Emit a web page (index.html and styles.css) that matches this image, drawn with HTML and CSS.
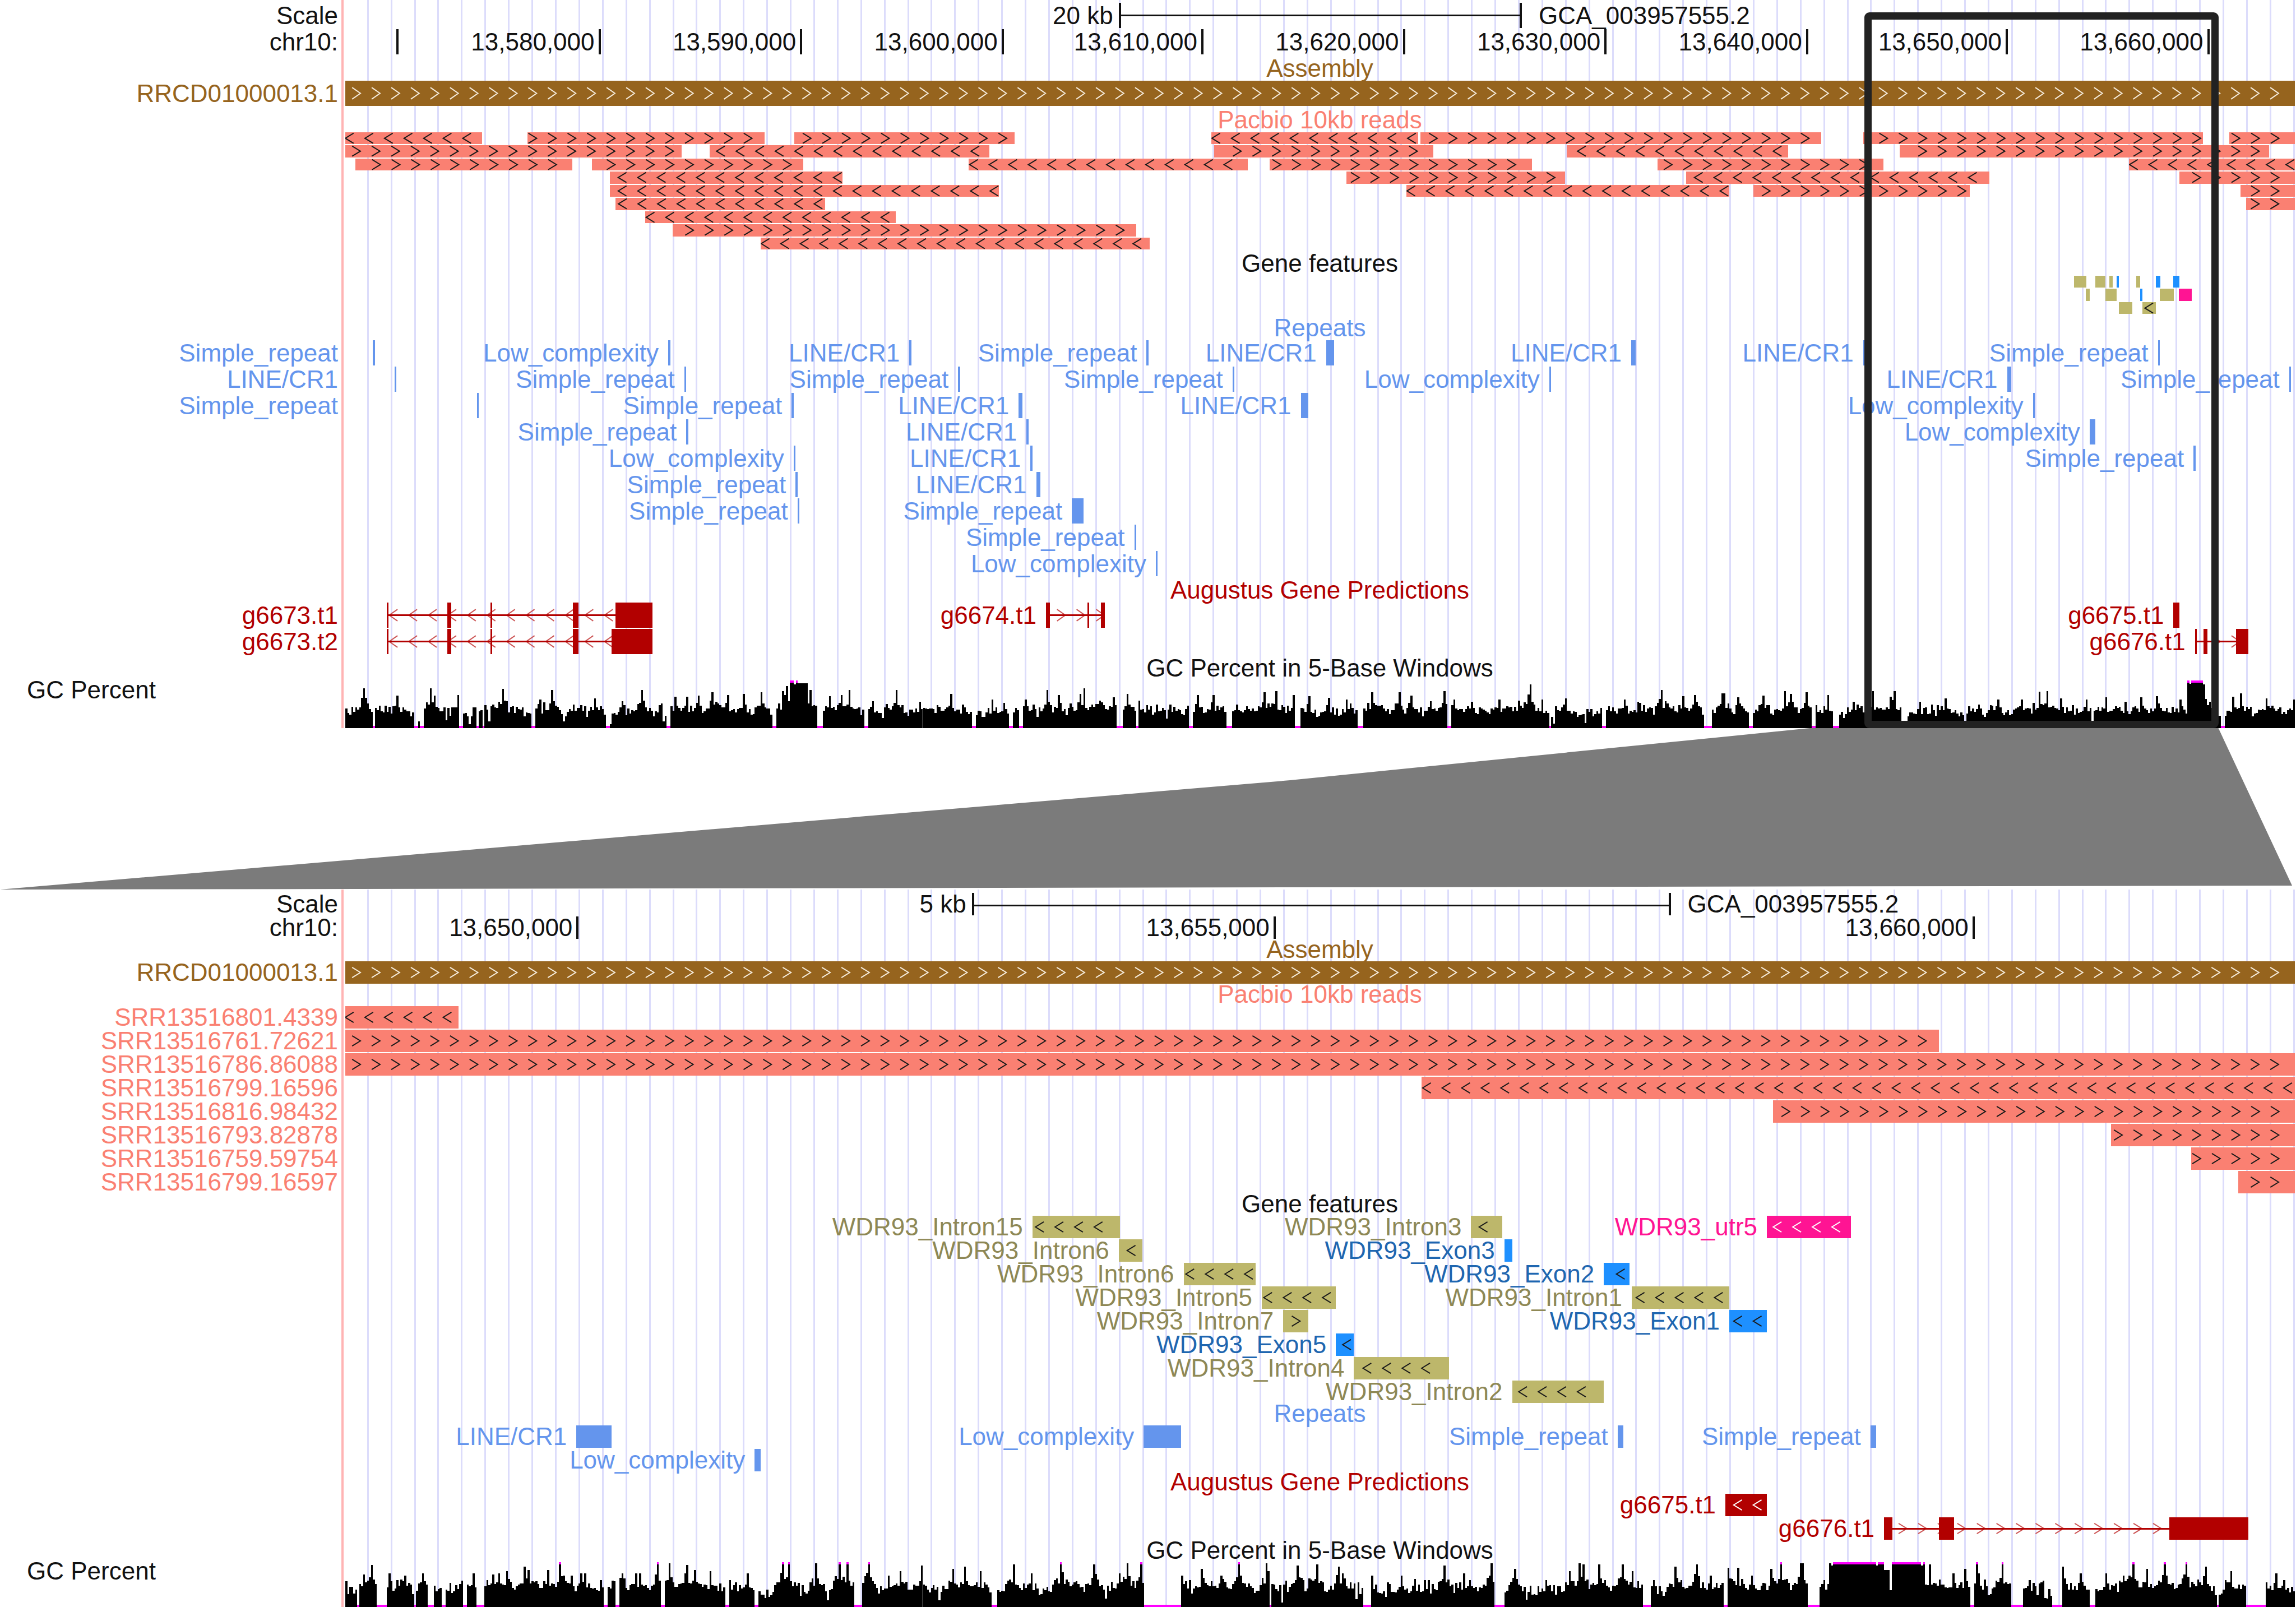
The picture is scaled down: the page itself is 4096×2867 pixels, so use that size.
FILE: index.html
```html
<!DOCTYPE html>
<html lang="en">
<head>
<meta charset="utf-8">
<title>GCA_003957555.2 chr10 genome browser</title>
<link rel="stylesheet" href="styles.css">
</head>
<body>
<main class="browser">
  <section class="panel panel-wide">
    <div class="track" data-track="wideScale"></div>
    <div class="track" data-track="wideRuler"></div>
    <h2 class="title assembly">Assembly</h2>
    <div class="track assembly" data-track="assembly"></div>
    <h2 class="title reads">Pacbio 10kb reads</h2>
    <div class="track reads dense dense-nine" data-track="wideReads"></div>
    <h2 class="title">Gene features</h2>
    <div class="track dense dense-three" data-track="wideFeatures"></div>
    <h2 class="title repeats">Repeats</h2>
    <div class="track repeats" data-track="wideRepeats"></div>
    <h2 class="title genes">Augustus Gene Predictions</h2>
    <div class="track genes" data-track="wideGenes"></div>
    <h2 class="title">GC Percent in 5-Base Windows</h2>
    <div class="row wiggle">
      <span class="wiggle-label">GC Percent</span>
      <div class="lane" data-wiggle="wide"></div>
    </div>
    <div class="highlight"></div>
  </section>

  <svg class="funnel" viewBox="0 0 4704 288" preserveAspectRatio="none" aria-hidden="true">
    <polygon points="3708,0 4545,0 4696,281 0,288 2643,93"/>
  </svg>

  <section class="panel panel-close">
    <div class="track" data-track="closeScale"></div>
    <div class="track" data-track="closeRuler"></div>
    <h2 class="title assembly">Assembly</h2>
    <div class="track assembly" data-track="assembly"></div>
    <h2 class="title reads">Pacbio 10kb reads</h2>
    <div class="track reads" data-track="closeReads"></div>
    <h2 class="title">Gene features</h2>
    <div class="track" data-track="closeFeatures"></div>
    <h2 class="title repeats">Repeats</h2>
    <div class="track repeats" data-track="closeRepeats"></div>
    <h2 class="title genes">Augustus Gene Predictions</h2>
    <div class="track genes" data-track="closeGenes"></div>
    <h2 class="title">GC Percent in 5-Base Windows</h2>
    <div class="row wiggle">
      <span class="wiggle-label">GC Percent</span>
      <div class="lane" data-wiggle="close"></div>
    </div>
  </section>
</main>
<script src="app.js"></script>
</body>
</html>
```
FILE: styles.css
```css
* {
  box-sizing: border-box;
}

body {
  margin: 0;
  background: #fff;
  color: #111;
  font-family: "Liberation Sans", Arial, Helvetica, sans-serif;
  font-size: 44px;
}

.browser {
  display: flex;
  flex-direction: column;
  overflow: hidden;
}

/* Panels: a label column, then the plot with its guide lines. */
.panel {
  --label-column: 14.966%;
  --pitch: 47px;
  --title: 45px;
  position: relative;
  padding-top: 5px;
}

.panel-close {
  --pitch: 42px;
  --title: 34px;
  padding-top: 6px;
}

.panel::before {
  content: "";
  position: absolute;
  inset: 0 0 0 var(--label-column);
  margin-left: -4px;
  border-left: 4px solid #ffb4b4;
  background:
    linear-gradient(#fff, #fff) 0 0 / 6px 100% no-repeat,
    repeating-linear-gradient(to right,
      #dcdcfb 1.2%, #dcdcfb calc(1.2% + 3px),
      #fff calc(1.2% + 3px), #fff 2.403%);
}

.title {
  position: relative;
  margin: 0 0 0 var(--label-column);
  font-size: inherit;
  font-weight: normal;
  line-height: var(--title);
  text-align: center;
}

.panel-close .title {
  padding-bottom: 4px;
}

.track {
  position: relative;
  display: grid;
  grid-auto-rows: 1fr;
}

.row {
  position: relative;
  display: grid;
  grid-template-columns: var(--label-column) 1fr;
  min-height: var(--pitch);
  line-height: calc(var(--pitch) - 2px);
  white-space: nowrap;
}

.dense .row {
  min-height: 0;
}

.dense-nine {
  min-height: 211px;
}

.dense-three {
  min-height: 70px;
}

.row-label {
  padding-right: 10px;
  text-align: right;
}

.lane {
  position: relative;
}

/* Items sit at their genomic position in the lane. */
.item {
  position: absolute;
  top: 0;
  bottom: 2px;
}

.item svg,
.wiggle svg {
  position: absolute;
  inset: 0;
  display: block;
  width: 100%;
  height: 100%;
}

.item-label {
  position: absolute;
  right: 100%;
  margin-right: 17px;
}

.arrows {
  fill: none;
  stroke: #1a1a1a;
  stroke-width: 2px;
  vector-effect: non-scaling-stroke;
}

.arrows.light {
  stroke: #fff;
}

.assembly { color: #96641e; }
.reads { color: #fa8072; }
.repeats { color: #6495ed; }
.genes { color: #b20000; }
.assembly .block { background: #96641e; }
.reads .block { background: #fa8072; }
.repeats .block { background: #6495ed; }
.genes .block { background: #b20000; }

.assembly .arrows { stroke: #f6ecdc; }

.intron .block { background: #bdb76b; }
.exon .block { background: #1e90ff; }
.utr .block { background: #ff1493; }
.intron { color: #8e8855; }
.exon { color: #1e66b0; }
.utr { color: #ff1493; }

.block {
  position: absolute;
  inset: 0;
}

.gene-body {
  fill: #b20000;
  shape-rendering: crispEdges;
}

.gene-arrows {
  fill: none;
  stroke: #cc5555;
  stroke-width: 2px;
  vector-effect: non-scaling-stroke;
}

.tick {
  width: 4px;
  background: #111;
}

.tick .item-label {
  margin-right: 7px;
}

.scale-bar {
  border: solid #111;
  border-width: 0 4px;
}

.scale-bar::after {
  content: "";
  position: absolute;
  top: 21px;
  left: 0;
  right: 0;
  height: 3px;
  background: #111;
}

.scale-bar .item-label {
  margin-right: 14px;
}

.scale-bar .assembly-name {
  position: absolute;
  left: 100%;
  margin-left: 34px;
}

.wiggle {
  min-height: 85px;
  line-height: 34px;
}

.panel-close .wiggle {
  min-height: 80px;
  line-height: 32px;
}

.wiggle-label {
  padding-left: 48px;
}

.wiggle svg {
  shape-rendering: crispEdges;
}

.clipped {
  fill: #f0f;
}

.funnel {
  display: block;
  width: 100%;
  height: 288px;
  fill: #7b7b7b;
}

.highlight {
  position: absolute;
  top: 22px;
  bottom: 0;
  left: 81.21%;
  right: 3.38%;
  border: 13px solid #222;
  border-radius: 9px;
}
```
FILE: app.js
```js
// Horizontal positions are in plot units: the lane runs from 704 to 4704.
const LANE_START = 704;
const LANE_WIDTH = 4000;
const ARROW_STEP = 40.1;
const ARROW_WIDTH = 18;

const percent = (units) => (units / LANE_WIDTH * 100).toFixed(3) + '%';

// Row helpers: [start, end, options]
const fwd = (start, end, more) => [start, end, Object.assign({ dir: '>' }, more)];
const rev = (start, end, tip, more) => [start, end, Object.assign({ dir: '<', tip }, more)];
const S = 'Simple_repeat', L = 'LINE/CR1', C = 'Low_complexity';
const named = (label, start, end) => [start, end || start + 4, { label }];
const tick = (at, label) => [at - 2, at + 2, { tick: true, label }];
const feat = (type, start, end, more) => [start, end, Object.assign({ type }, more)];
const wdr = (name, type, start, end, tip, more) =>
  [start, end, Object.assign({ type, label: 'WDR93_' + name, dir: tip ? '<' : '', tip }, more)];

const tracks = {
  wideScale: [['Scale', [2292, 3118, { scale: true, label: '20 kb' }]]],
  wideRuler: [['chr10:', tick(814), tick(1228, '13,580,000'), tick(1641, '13,590,000'),
    tick(2054, '13,600,000'), tick(2463, '13,610,000'), tick(2876, '13,620,000'),
    tick(3289, '13,630,000'), tick(3702, '13,640,000'), tick(4111, '13,650,000'),
    tick(4524, '13,660,000')]],
  assembly: [['RRCD01000013.1', fwd(708, 4702)]],
  wideReads: [
    ['', rev(708, 988, 708), fwd(1081, 1566), fwd(1627, 2079), rev(2482, 2906, 2483),
      fwd(2910, 3731), fwd(3817, 4513), fwd(4567, 4702)],
    ['', fwd(708, 1397), rev(1454, 2027, 1468), fwd(2488, 2937), rev(3210, 3663, 3232), fwd(3892, 4649)],
    ['', fwd(728, 1173), fwd(1213, 1646), rev(1984, 2556, 1986), fwd(2601, 3139), fwd(3396, 3859),
      rev(4362, 4702, 4363)],
    ['', rev(1250, 1726, 1267), fwd(2758, 3207), rev(3455, 4076, 3472), fwd(4465, 4702)],
    ['', rev(1250, 2047, 1267), rev(2881, 3543, 2882), fwd(3592, 4036), fwd(4590, 4702)],
    ['', rev(1261, 1690, 1267), fwd(4602, 4702)],
    ['', rev(1322, 1835, 1324)],
    ['', fwd(1378, 2328)],
    ['', rev(1558, 2356, 1559)]
  ],
  wideFeatures: [
    ['', feat('intron', 4249, 4274), feat('intron', 4293, 4314), feat('intron', 4321, 4329),
      feat('exon', 4337, 4341), feat('intron', 4377, 4385), feat('exon', 4417, 4426), feat('exon', 4453, 4465)],
    ['', feat('intron', 4273, 4281), feat('intron', 4313, 4337), feat('exon', 4385, 4389),
      feat('intron', 4425, 4454), feat('utr', 4464, 4490)],
    ['', feat('intron', 4341, 4369), feat('intron', 4389, 4417, { dir: '<', tip: 4394 })]
  ],
  wideRepeats: [
    [S, [764, 768, {}], named(C, 1369), named(L, 1863), named(S, 2349), named(L, 2717, 2733),
      named(L, 3342, 3351), named(L, 3817, 3823), named(S, 4421)],
    [L, [808, 812, {}], named(S, 1402), named(S, 1963), named(S, 2525), named(C, 3174),
      named(L, 4112, 4121), named(S, 4690)],
    [S, [977, 981, {}], named(S, 1622), named(L, 2087, 2095), named(L, 2665, 2681), named(C, 4165)],
    ['', named(S, 1406), named(L, 2103), named(C, 4281, 4293)],
    ['', named(C, 1626), named(L, 2111), named(S, 4494)],
    ['', named(S, 1630), named(L, 2123, 2132)],
    ['', named(S, 1634), named(S, 2196, 2220)],
    ['', named(S, 2324)],
    ['', named(C, 2368)]
  ],
  wideGenes: [
    ['g6673.t1', [792, 1337, { dir: '<', tip: 797,
      exons: [[792, 796], [916, 924], [1004, 1008], [1173, 1185], [1261, 1337]] }],
      [2143, 2264, { dir: '>', label: 'g6674.t1', exons: [[2143, 2151], [2228, 2232], [2256, 2264]] }],
      named('g6675.t1', 4453, 4465)],
    ['g6673.t2', [792, 1337, { dir: '<', tip: 797,
      exons: [[792, 796], [916, 924], [1004, 1008], [1173, 1185], [1253, 1337]] }],
      [4497, 4606, { dir: '>', label: 'g6676.t1', exons: [[4497, 4501], [4514, 4522], [4581, 4606]] }]]
  ],

  closeScale: [['Scale', [1991, 3423, { scale: true, label: '5 kb' }]]],
  closeRuler: [['chr10:', tick(1183, '13,650,000'), tick(2611, '13,655,000'), tick(4043, '13,660,000')]],
  closeReads: [
    ['SRR13516801.4339', rev(708, 940, 708)],
    ['SRR13516761.72621', fwd(708, 3972)],
    ['SRR13516786.86088', fwd(708, 4702)],
    ['SRR13516799.16596', rev(2913, 4702, 2915)],
    ['SRR13516816.98432', fwd(3632, 4702)],
    ['SRR13516793.82878', fwd(4325, 4702)],
    ['SRR13516759.59754', fwd(4489, 4702)],
    ['SRR13516799.16597', fwd(4586, 4702)]
  ],
  closeFeatures: [
    ['', wdr('Intron15', 'intron', 2115, 2295, 2121), wdr('Intron3', 'intron', 3014, 3078, 3031),
      wdr('utr5', 'utr', 3620, 3792, 3633, { light: true })],
    ['', wdr('Intron6', 'intron', 2292, 2340, 2309), wdr('Exon3', 'exon', 3082, 3098)],
    ['', wdr('Intron6', 'intron', 2425, 2573, 2429), wdr('Exon2', 'exon', 3286, 3339, 3312)],
    ['', wdr('Intron5', 'intron', 2585, 2737, 2589), wdr('Intron1', 'intron', 3343, 3543, 3352)],
    ['', wdr('Intron7', 'intron', 2629, 2680, 0, { dir: '>' }), wdr('Exon1', 'exon', 3543, 3620, 3552)],
    ['', wdr('Exon5', 'exon', 2737, 2774, 2751)],
    ['', wdr('Intron4', 'intron', 2774, 2969, 2793)],
    ['', wdr('Intron2', 'intron', 3098, 3286, 3111)]
  ],
  closeRepeats: [
    ['', named(L, 1181, 1253), named(C, 2343, 2420), named(S, 3314, 3326), named(S, 3832, 3844)],
    ['', named(C, 1546, 1558)]
  ],
  closeGenes: [
    ['', [3535, 3620, { dir: '<', tip: 3552, label: 'g6675.t1', light: true }]],
    ['', [3860, 4606, { dir: '>', label: 'g6676.t1', exons: [[3860, 3877], [3973, 4004], [4445, 4606]] }]]
  ]
};

function element(tag, className, parent, text) {
  const node = document.createElement(tag);
  node.className = className;
  if (text) node.textContent = text;
  parent.appendChild(node);
  return node;
}

// Forward arrows share one phase over the whole lane, reverse ones start at their own tip.
function arrowPath(start, end, options, top, bottom) {
  const middle = 50;
  let path = '';
  let x = options.dir === '<' ? options.tip : 722;
  while (x < start) x += ARROW_STEP;
  for (; x + ARROW_WIDTH <= end + 1; x += ARROW_STEP) {
    const a = x.toFixed(1), b = (x + ARROW_WIDTH - 1).toFixed(1);
    path += options.dir === '<'
      ? `M${b} ${top}L${a} ${middle}L${b} ${bottom}`
      : `M${a} ${top}L${b} ${middle}L${a} ${bottom}`;
  }
  return path;
}

function drawItem(lane, [start, end, options], dense) {
  const node = element('div', 'item', lane);
  node.style.left = percent(start - LANE_START);
  if (options.tick) {
    node.classList.add('tick');
  } else {
    node.style.width = percent(end - start);
  }
  if (options.type) node.classList.add(options.type);
  const [top, bottom] = dense ? [8, 92] : [27, 73];
  const svg = (inner) =>
    `<svg viewBox="${start} 0 ${end - start} 100" preserveAspectRatio="none" aria-hidden="true">${inner}</svg>`;

  if (options.scale) {
    node.classList.add('scale-bar');
    element('span', 'assembly-name', node, 'GCA_003957555.2');
  } else if (options.exons) {
    const exons = options.exons.map(([a, b]) => `M${a} 0H${b}V100H${a}Z`).join('');
    node.innerHTML = svg(
      `<path class="gene-arrows" d="${arrowPath(start, end, options, top, bottom)}"/>` +
      `<path class="gene-body" d="M${start} 47H${end}V54H${start}Z"/>` +
      `<path class="gene-body" d="${exons}"/>`);
  } else if (!options.tick) {
    element('div', 'block', node);
    if (options.dir) {
      node.insertAdjacentHTML('beforeend', svg(
        `<path class="arrows${options.light ? ' light' : ''}" d="${arrowPath(start, end, options, top, bottom)}"/>`));
    }
  }
  if (options.label) element('span', 'item-label', node, options.label);
}

document.querySelectorAll('[data-track]').forEach((track) => {
  const dense = track.classList.contains('dense');
  tracks[track.dataset.track].forEach(([label, ...items]) => {
    const row = element('div', 'row', track);
    element('span', 'row-label', row, label);
    const lane = element('div', 'lane', row);
    items.forEach((item) => drawItem(lane, item, dense));
  });
});

// GC content: the peaks as [position, height in percent], over a low background.
const gc = {
  wide: {
    seed: 7, floor: 12, spread: 48, cap: 5, zero: 3,
    peaks: [[745, 83], [813, 68], [882, 84], [890, 68], [938, 70], [1030, 82], [1105, 60], [1131, 80], [1175, 50],
      [1218, 62], [1275, 57], [1315, 80], [1380, 66], [1404, 66], [1428, 68], [1458, 75], [1491, 69], [1524, 72],
      [1560, 75], [1604, 78], [1612, 88], [1658, 80], [1700, 67], [1724, 70], [1740, 80], [1786, 56], [1835, 80],
      [1883, 55], [1948, 72], [1972, 50], [2032, 60], [2056, 53], [2100, 60], [2145, 80], [2166, 70], [2212, 72],
      [2218, 84], [2252, 58], [2278, 65], [2309, 72], [2334, 58], [2404, 45], [2453, 70], [2486, 70], [2534, 50],
      [2590, 75], [2614, 78], [2650, 70], [2680, 67], [2723, 63], [2758, 60], [2808, 75], [2867, 75], [2890, 68],
      [2931, 57], [2956, 78], [2977, 60], [3015, 55], [3068, 60], [3108, 58], [3136, 92], [3160, 60], [3206, 62],
      [3281, 65], [3326, 60], [3353, 55], [3404, 80], [3448, 67], [3469, 70], [3526, 73], [3532, 73], [3561, 65],
      [3611, 68], [3657, 78], [3668, 72], [3698, 75], [3744, 70], [3796, 55], [3837, 78], [3872, 66], [3878, 78],
      [3933, 55], [3986, 62], [4051, 50], [4091, 60], [4140, 60], [4176, 76], [4191, 78], [4219, 62], [4271, 60],
      [4314, 65], [4354, 55], [4386, 65], [4418, 67], [4466, 60], [4515, 92], [4575, 66], [4588, 73], [4641, 62],
      [4699, 60]],
    plateaus: [[1619, 1624, 100], [1625, 1628, 92], [1629, 1635, 100], [1636, 1651, 94], [4482, 4511, 100]],
    gaps: [[764, 768], [848, 854], [860, 868], [940, 945], [976, 980], [988, 992], [1090, 1094], [1242, 1246],
      [1365, 1370], [1582, 1588], [1676, 1684], [1772, 1776], [1990, 1996], [2067, 2072], [2086, 2092],
      [2289, 2296], [2328, 2332], [2436, 2442], [2512, 2522], [2652, 2662], [2780, 2790], [2966, 2970],
      [3174, 3178], [3284, 3288], [3490, 3504], [3584, 3588], [3712, 3716], [3756, 3764], [3895, 3905],
      [4024, 4028], [4284, 4288], [4548, 4556]]
  },
  close: {
    seed: 23, floor: 2, spread: 74, cap: 5, zero: 8,
    peaks: [[720, 45], [745, 72], [761, 94], [798, 75], [813, 60], [830, 70], [866, 75], [903, 75], [947, 75],
      [970, 75], [995, 60], [1007, 72], [1020, 75], [1038, 80], [1071, 90], [1079, 83], [1123, 83], [1147, 100],
      [1170, 70], [1191, 75], [1198, 75], [1228, 60], [1272, 75], [1302, 75], [1308, 75], [1347, 100], [1368, 97],
      [1407, 94], [1420, 83], [1452, 80], [1492, 60], [1532, 75], [1604, 100], [1616, 100], [1672, 97],
      [1720, 100], [1733, 100], [1780, 100], [1818, 70], [1843, 80], [1888, 92], [1953, 85], [1977, 90],
      [2008, 80], [2077, 95], [2113, 75], [2173, 100], [2241, 95], [2290, 75], [2309, 97], [2338, 100],
      [2421, 70], [2461, 85], [2500, 70], [2538, 100], [2594, 97], [2598, 80], [2658, 92], [2698, 95],
      [2743, 90], [2748, 75], [2808, 70], [2871, 70], [2918, 60], [2959, 93], [2998, 75], [3055, 97], [3103, 85],
      [3166, 60], [3216, 80], [3233, 97], [3244, 95], [3273, 95], [3288, 60], [3321, 95], [3341, 80],
      [3386, 60], [3429, 90], [3473, 95], [3501, 70], [3541, 87], [3561, 87], [3588, 70], [3626, 85],
      [3649, 100], [3686, 97], [3691, 97], [3736, 60], [3951, 95], [4001, 75], [4026, 85], [4050, 100],
      [4102, 100], [4158, 60], [4226, 90], [4261, 75], [4311, 75], [4351, 70], [4371, 100], [4396, 85],
      [4435, 100], [4476, 100], [4519, 90], [4568, 80], [4616, 95], [4661, 75]],
    plateaus: [[3746, 3750, 97], [3751, 3858, 100], [3859, 3869, 82], [3874, 3876, 60], [3877, 3944, 100]],
    gaps: [[732, 736], [772, 792], [848, 852], [876, 886], [906, 910], [948, 953], [976, 990], [1236, 1242],
      [1262, 1266], [1354, 1358], [1486, 1490], [1545, 1554], [1750, 1764], [2030, 2040], [2345, 2420],
      [2600, 2604], [2793, 2808], [3060, 3080], [3366, 3380], [3530, 3538], [3705, 3725], [4036, 4044],
      [4122, 4142], [4206, 4222], [4280, 4290], [4600, 4640]]
  }
};

function drawWiggle(node, { seed, floor, spread, cap, zero, peaks, plateaus, gaps }) {
  const step = 4.01;
  const random = () => {
    seed = (seed * 16807) % 2147483647;
    return seed / 2147483647;
  };
  for (let i = 0; i < 10; i++) random();
  let drift = 0.5;
  let bars = '';
  let clipped = '';
  for (let i = 0; i < 996; i++) {
    const x = 708 + i * step;
    drift = drift * 0.6 + random() * 0.4;
    let height = floor + spread * (drift * 0.6 + random() * 0.4);
    if (random() < 0.08) height *= 0.35;
    for (const [at, peak] of peaks) {
      const columns = Math.abs(Math.round((at - x) / step));
      if (columns === 0) height = peak;
      else if (columns < 6) height = Math.max(height, peak * (0.84 - columns * 0.08) * (0.65 + random() * 0.4));
    }
    if (gaps.some(([a, b]) => x + step / 2 >= a && x + step / 2 <= b + 2)) height = 0;
    for (const [a, b, level] of plateaus) {
      if (x + step / 2 >= a && x <= b) height = level > 98 && random() < 0.12 ? 93 : level;
    }
    const left = x.toFixed(1), right = (x + step).toFixed(1);
    if (height < zero) {
      clipped += `M${left} ${100 - cap}H${right}V100H${left}Z`;
      continue;
    }
    bars += `M${left} ${(100 - height).toFixed(1)}H${right}V100H${left}Z`;
    if (height >= 98) clipped += `M${left} 0H${right}V${cap}H${left}Z`;
  }
  node.innerHTML = `<svg viewBox="${LANE_START} 0 ${LANE_WIDTH} 100" preserveAspectRatio="none" aria-hidden="true">` +
    `<path d="${bars}"/><path class="clipped" d="${clipped}"/></svg>`;
}

document.querySelectorAll('[data-wiggle]').forEach((node) => drawWiggle(node, gc[node.dataset.wiggle]));
```
